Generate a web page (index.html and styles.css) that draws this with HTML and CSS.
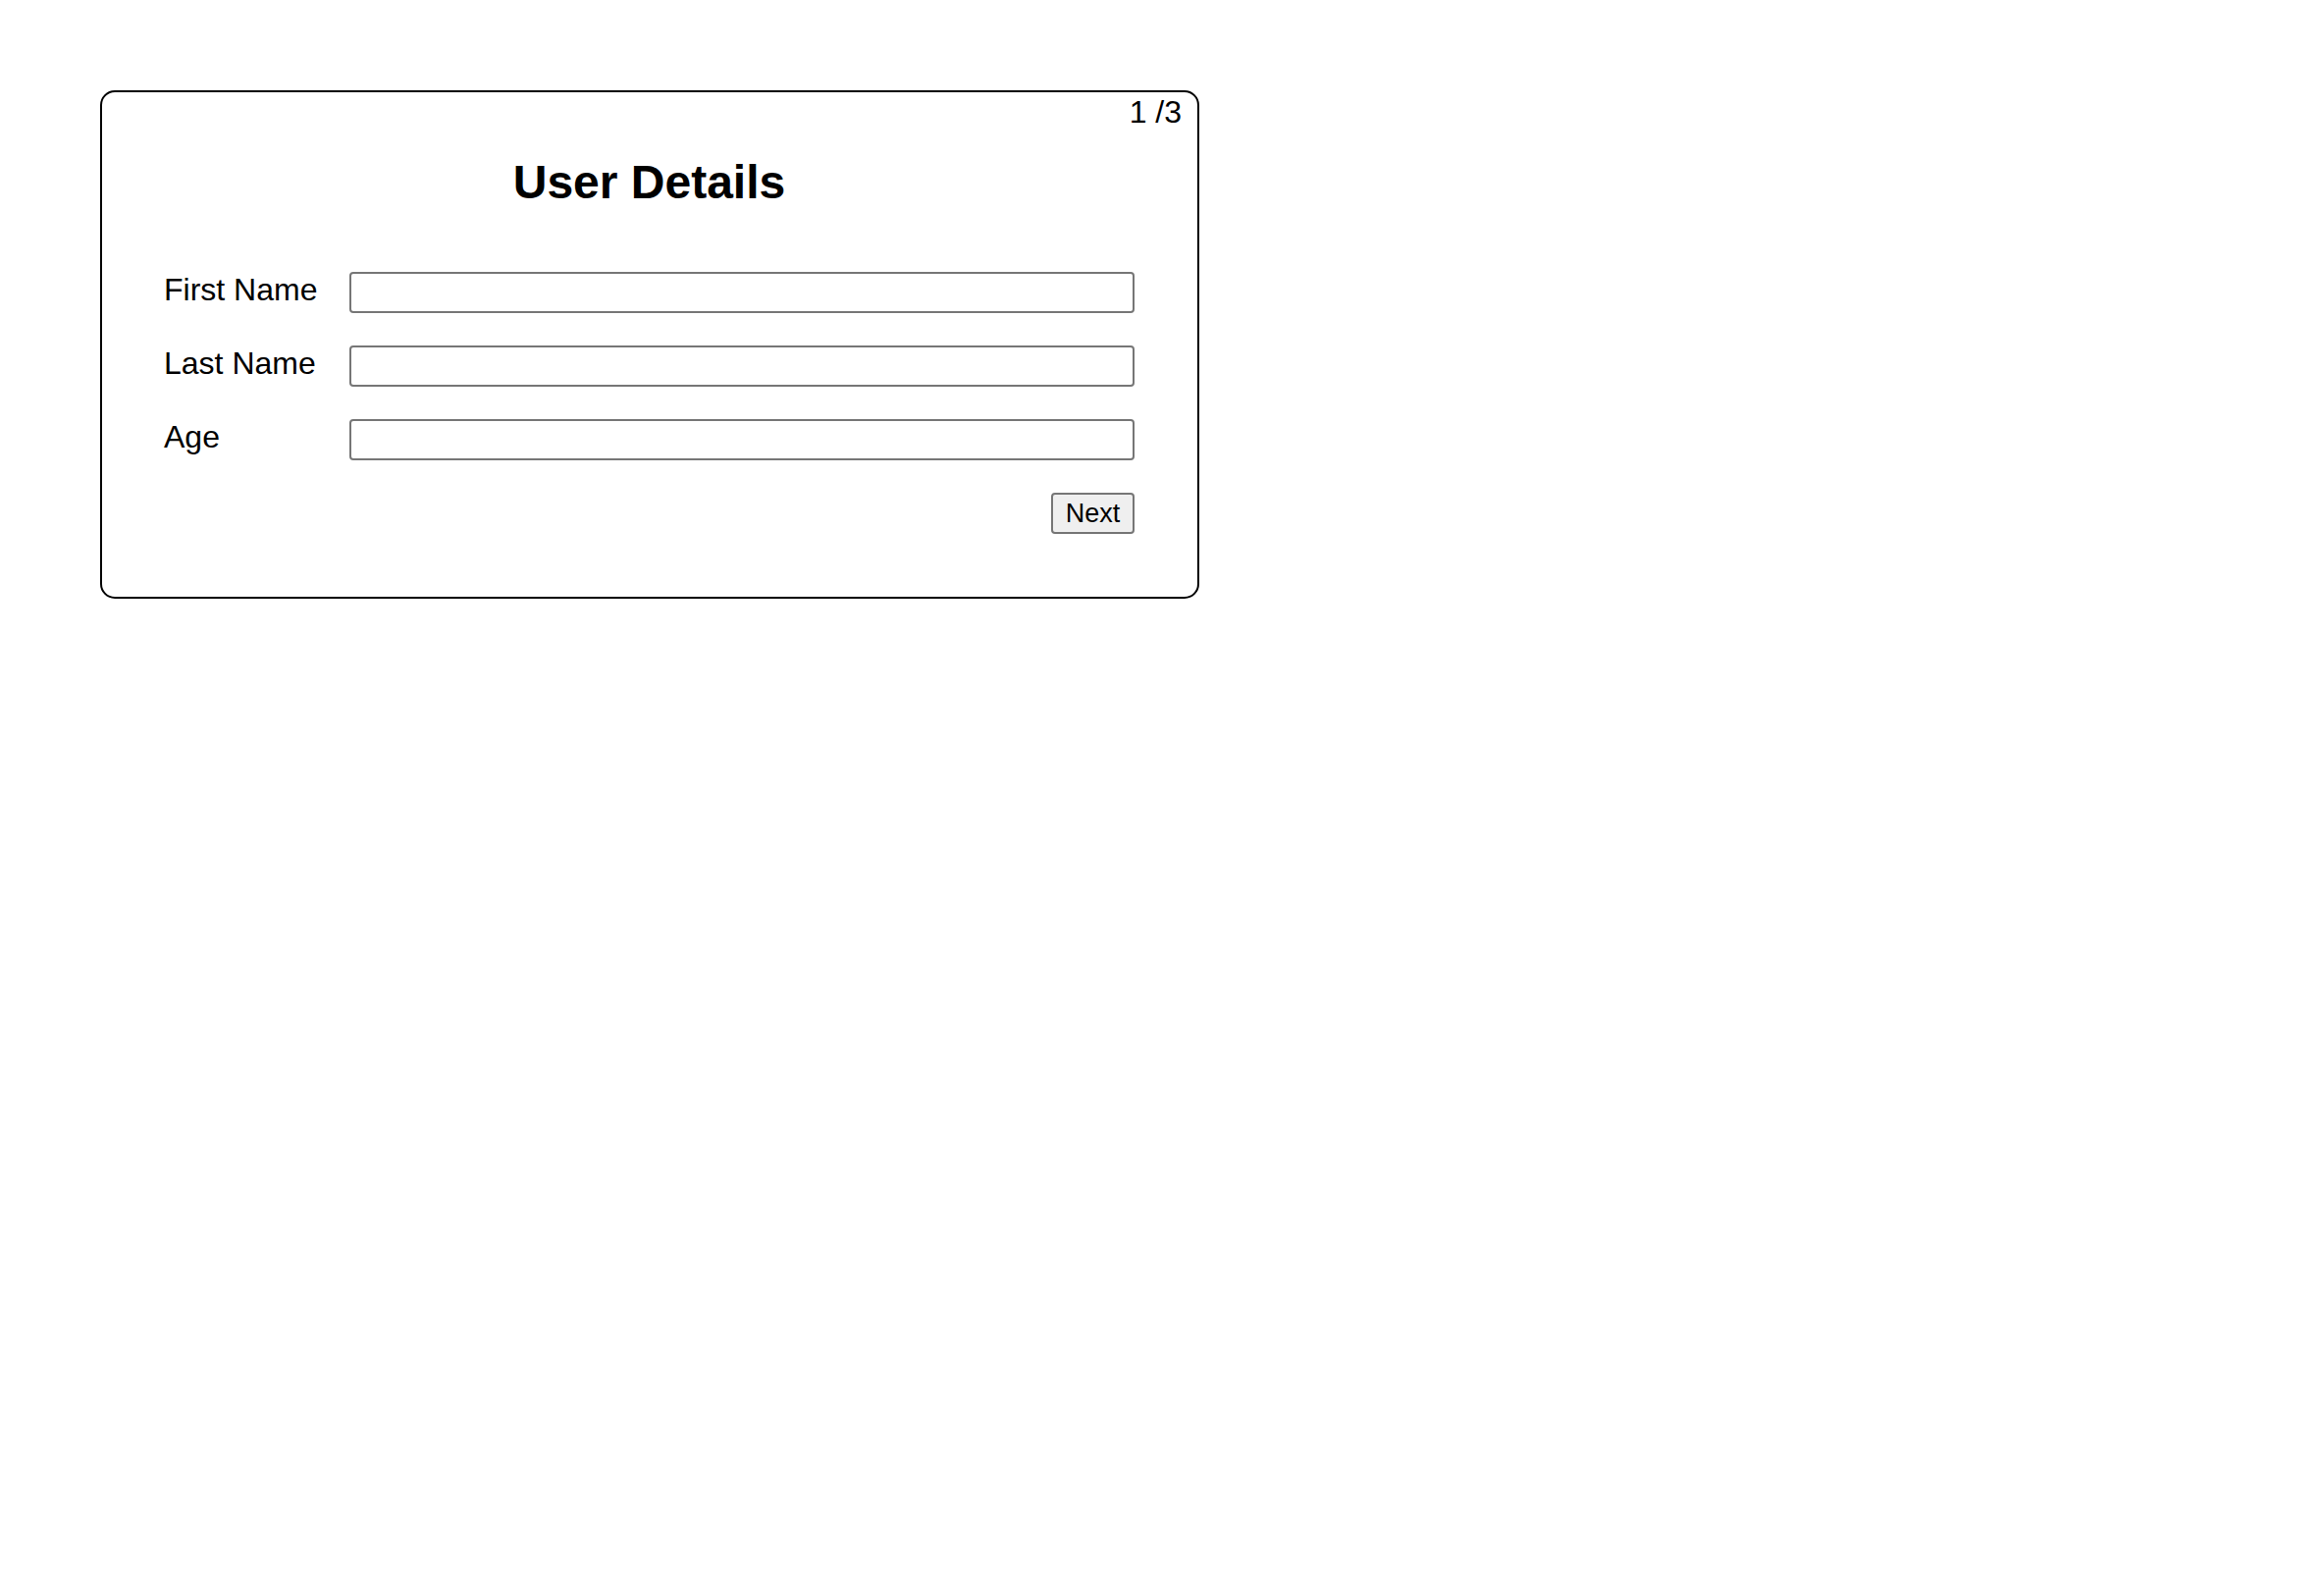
FILE: index.html
```html
<!DOCTYPE html>
<html lang="en">
<head>
<meta charset="utf-8">
<title>User Details</title>
<link rel="stylesheet" href="styles.css">
</head>
<body>
<div class="card">
  <div class="step">1 /3</div>
  <h1 class="title">User Details</h1>
  <form class="form">
    <div class="row">
      <label class="label" for="first">First Name</label>
      <input class="field" id="first" type="text">
    </div>
    <div class="row">
      <label class="label" for="last">Last Name</label>
      <input class="field" id="last" type="text">
    </div>
    <div class="row">
      <label class="label" for="age">Age</label>
      <input class="field" id="age" type="text">
    </div>
    <div class="actions">
      <button class="btn" type="button">Next</button>
    </div>
  </form>
</div>
</body>
</html>
```

FILE: styles.css
```css
html, body {
  margin: 0;
  padding: 0;
  background: #ffffff;
}

body {
  font-family: "Liberation Sans", Arial, Helvetica, sans-serif;
  color: #000;
}

.card {
  position: relative;
  box-sizing: border-box;
  width: 1120px;
  margin: 92px 0 0 102px;
  border: 2px solid #000;
  border-radius: 15px;
  padding: 0 64px 64px 63px;
}

.step {
  position: absolute;
  top: 2px;
  right: 16px;
  font-size: 32px;
  line-height: 36px;
}

.title {
  margin: 65px 0 0;
  font-size: 48px;
  line-height: 54px;
  font-weight: bold;
  text-align: center;
}

.form {
  margin-top: 64px;
  display: flex;
  flex-direction: column;
  gap: 33px;
}

.row {
  display: grid;
  grid-template-columns: 189px 1fr;
  align-items: start;
}

.label {
  font-size: 32px;
  line-height: 36px;
}

.field {
  box-sizing: border-box;
  width: 100%;
  height: 42px;
  margin: 0;
  border: 2px solid #767676;
  border-radius: 4px;
  background: #fff;
  font-family: inherit;
  font-size: 26px;
}

.actions {
  display: flex;
  justify-content: flex-end;
}

.btn {
  box-sizing: border-box;
  width: 85px;
  height: 42px;
  margin: 0;
  padding: 0;
  border: 2px solid #767676;
  border-radius: 4px;
  background: #efefef;
  font-family: "Liberation Sans", Arial, sans-serif;
  font-size: 27px;
  color: #000;
}
```
